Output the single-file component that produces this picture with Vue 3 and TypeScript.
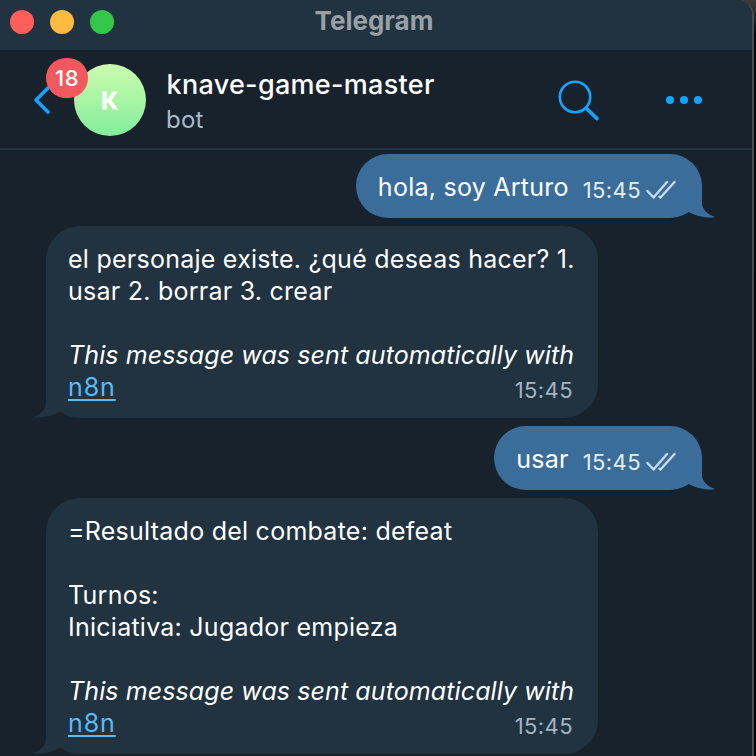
<script setup lang="ts">
interface Line {
  text: string
  kind?: 'italic' | 'link'
}

interface Message {
  id: number
  outgoing: boolean
  lines: Line[]
  time: string
}

const unread = 18
const chat = { title: 'knave-game-master', status: 'bot', initial: 'K' }

const messages: Message[] = [
  { id: 1, outgoing: true, lines: [{ text: 'hola, soy Arturo' }], time: '15:45' },
  {
    id: 2,
    outgoing: false,
    lines: [
      { text: 'el personaje existe. ¿qué deseas hacer? 1.' },
      { text: 'usar 2. borrar 3. crear' },
      { text: '' },
      { text: 'This message was sent automatically with', kind: 'italic' },
      { text: 'n8n', kind: 'link' },
    ],
    time: '15:45',
  },
  { id: 3, outgoing: true, lines: [{ text: 'usar' }], time: '15:45' },
  {
    id: 4,
    outgoing: false,
    lines: [
      { text: '=Resultado del combate: defeat' },
      { text: '' },
      { text: 'Turnos:' },
      { text: 'Iniciativa: Jugador empieza' },
      { text: '' },
      { text: 'This message was sent automatically with', kind: 'italic' },
      { text: 'n8n', kind: 'link' },
    ],
    time: '15:45',
  },
]
</script>

<template>
  <div class="desktop">
    <div class="window">
      <div class="titlebar">
        <div class="lights">
          <span class="light red"></span>
          <span class="light yellow"></span>
          <span class="light green"></span>
        </div>
        <span class="app-name">Telegram</span>
      </div>

      <header class="header">
        <div class="back">
          <svg class="chevron" width="20" height="32" viewBox="0 0 20 32">
            <path d="M16 4 L4 16 L16 28" />
          </svg>
          <span class="badge">{{ unread }}</span>
        </div>
        <div class="avatar">{{ chat.initial }}</div>
        <div class="info">
          <span class="title">{{ chat.title }}</span>
          <span class="status">{{ chat.status }}</span>
        </div>
        <svg class="search" width="44" height="44" viewBox="0 0 44 44">
          <circle cx="19" cy="19" r="15.2" />
          <path d="M30.3 30.2 L41 40.6" />
        </svg>
        <div class="more"><i></i><i></i><i></i></div>
      </header>

      <main class="messages">
        <div
          v-for="m in messages"
          :key="m.id"
          class="bubble"
          :class="m.outgoing ? 'out' : 'in'"
        >
          <svg class="tail" width="28" height="32" viewBox="0 0 28 32">
            <path d="M12 0 V17 C12 23 7 28 0 30.6 V31.5 C11 32 19 29.500 26 25.500 L28 24 V0 Z" />
          </svg>
          <div class="text">
            <div v-for="(line, i) in m.lines" :key="i" class="line">
              <a v-if="line.kind === 'link'" class="link">{{ line.text }}</a>
              <em v-else-if="line.kind === 'italic'">{{ line.text }}</em>
              <span v-else>{{ line.text }}</span>
            </div>
          </div>
          <div class="meta">
            <span class="time">{{ m.time }}</span>
            <svg v-if="m.outgoing" class="checks" width="30" height="20" viewBox="0 0 30 20">
              <path d="M1.500 11 L7.500 17.500 L21 2 M13.500 16.700 L14.500 17.500 L28.500 2" />
            </svg>
          </div>
        </div>
      </main>
    </div>
  </div>
</template>

<style>
body {
  margin: 0;
  background: #000;
}
</style>

<style scoped>
.desktop {
  width: 756px;
  height: 756px;
  overflow: hidden;
  background: linear-gradient(#3c3c3c 0, #2a2a2a 14px, #050505 34px, #020202 100%);
  font-family: Inter, 'Liberation Sans', sans-serif;
}
.window {
  box-sizing: border-box;
  width: 754px;
  height: 756px;
  overflow: hidden;
  border-right: 2px solid #474d55;
  border-radius: 3px 16px 0 0;
  background: #18222c;
}
.titlebar {
  position: relative;
  display: flex;
  align-items: center;
  justify-content: center;
  height: 50px;
  background: #213240;
}
.lights {
  position: absolute;
  left: 10px;
  top: 10px;
  display: flex;
  gap: 16px;
}
.light {
  width: 24px;
  height: 24px;
  border-radius: 50%;
}
.red { background: #ff5f58; }
.yellow { background: #ffbb3f; }
.green { background: #34c84b; }
.app-name {
  padding: 0 4px 10px 0;
  font-size: 26px;
  font-weight: 700;
  color: #99a0a6;
}
.header {
  box-sizing: border-box;
  display: flex;
  align-items: center;
  height: 100px;
  padding: 0 50px 0 32px;
  border-bottom: 2px solid #213240;
}
.back {
  position: relative;
  z-index: 1;
  width: 42px;
  height: 36px;
}
.chevron {
  display: block;
  margin-top: 3px;
  fill: none;
  stroke: #12a5ff;
  stroke-width: 3.6;
  stroke-linecap: round;
  stroke-linejoin: round;
}
.badge {
  position: absolute;
  left: 14px;
  top: -23px;
  width: 42px;
  height: 40px;
  border-radius: 20px;
  background: #f05a5e;
  color: #fff;
  font-size: 22px;
  font-weight: 500;
  line-height: 40px;
  letter-spacing: 0.4px;
  text-align: center;
}
.avatar {
  box-sizing: border-box;
  width: 72px;
  height: 72px;
  margin-top: 2px;
  padding-right: 2px;
  border-radius: 50%;
  background: linear-gradient(#cdfcae, #82ed9c);
  color: #fff;
  font-family: Lato, Inter, sans-serif;
  font-size: 23px;
  font-weight: 900;
  line-height: 72px;
  text-align: center;
  -webkit-text-stroke: 0.8px #fff;
}
.info {
  display: flex;
  flex: 1;
  flex-direction: column;
  margin: 6px 0 0 20px;
}
.title {
  padding-left: 0.5px;
  font-size: 27px;
  font-weight: 500;
  line-height: 36px;
  letter-spacing: 0.3px;
  color: #fff;
}
.status {
  font-size: 24px;
  line-height: 34px;
  letter-spacing: 0.2px;
  color: #a9bacb;
}
.search {
  margin: 2px 66px 0 0;
  fill: none;
  stroke: #12a5ff;
  stroke-width: 2.6;
  stroke-linecap: round;
}
.search path { stroke-width: 3.6; }
.more {
  display: flex;
  gap: 6px;
  margin: 2px 0 0;
}
.more i {
  width: 8px;
  height: 8px;
  border-radius: 50%;
  background: #12a5ff;
}
.messages {
  display: flex;
  flex-direction: column;
  gap: 8px;
  padding: 4px 50px 0 46px;
}
.bubble {
  position: relative;
  box-sizing: border-box;
  display: flex;
  align-items: flex-end;
  padding: 17px 22px 15px;
  border-radius: 34px;
  color: #fff;
}
.in {
  align-self: flex-start;
  width: 552px;
  background: #213240;
}
.out {
  align-self: flex-end;
  padding-right: 25px;
  background: #3a6d99;
}
.tail {
  position: absolute;
  bottom: 0;
  left: -12px;
  fill: #213240;
}
.out .tail {
  left: auto;
  right: -12px;
  fill: #3a6d99;
  transform: scaleX(-1);
}
.text,
.meta {
  position: relative;
}
.line {
  height: 32px;
  font-size: 25px;
  line-height: 32px;
  letter-spacing: 0.25px;
  white-space: nowrap;
}
.line em {
  letter-spacing: 0.1px;
}
.link {
  color: #5eb9f7;
  letter-spacing: 0.9px;
  text-decoration: underline;
  text-decoration-thickness: 2px;
  text-underline-offset: 3px;
}
.meta {
  display: flex;
  align-items: center;
  height: 32px;
}
.in .meta {
  position: absolute;
  right: 25px;
  bottom: 12px;
  color: #a3b4c3;
}
.out .meta {
  margin: 0 0 -3px 14px;
  color: #e3edf4;
}
.time {
  font-size: 22px;
  line-height: 32px;
  letter-spacing: 0.4px;
}
.checks {
  margin-left: 5px;
  margin-right: 1px;
  fill: none;
  stroke: #c9dbe8;
  stroke-width: 2.4;
  stroke-linecap: round;
  stroke-linejoin: round;
}
</style>
